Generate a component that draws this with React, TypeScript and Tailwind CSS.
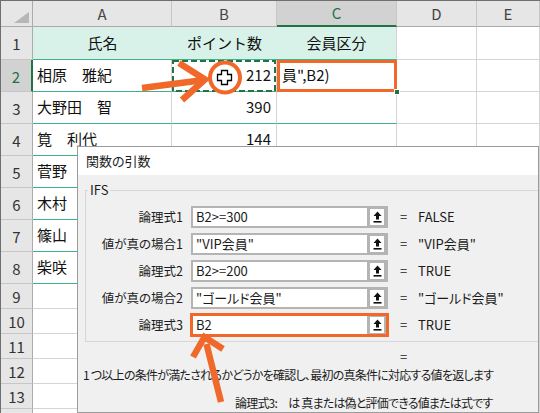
import React from 'react';

const GRID = 'grid grid-cols-[32px_139px_105px_120px_80px_63px]';

const people = [
  { n: 2, name: '相原　雅紀', pt: '212' },
  { n: 3, name: '大野田　智', pt: '390' },
  { n: 4, name: '筧　利代', pt: '144' },
  { n: 5, name: '菅野', pt: '' },
  { n: 6, name: '木村', pt: '' },
  { n: 7, name: '篠山', pt: '' },
  { n: 8, name: '柴咲', pt: '' },
];

const args = [
  { label: '論理式1', value: 'B2>=300', result: 'FALSE' },
  { label: '値が真の場合1', value: '"VIP会員"', result: '"VIP会員"' },
  { label: '論理式2', value: 'B2>=200', result: 'TRUE' },
  { label: '値が真の場合2', value: '"ゴールド会員"', result: '"ゴールド会員"' },
  { label: '論理式3', value: 'B2', result: 'TRUE', active: true },
];

const ColHead: React.FC<{ label: string; selected?: boolean }> = ({ label, selected }) =>
  selected ? (
    <div className="h-[26px] flex items-center justify-center pt-[1px] bg-[#d2d2d2] border-r border-r-[#c6c6c6] border-b-2 border-b-[#217346] text-[#217346] text-[15px]">
      {label}
    </div>
  ) : (
    <div className="h-[26px] flex items-center justify-center pt-[1px] bg-[#e6e6e6] border-r border-b border-r-[#c6c6c6] border-b-[#ababab] text-[#444] text-[15px]">
      {label}
    </div>
  );

const RowHead: React.FC<{ n?: number; tall?: string; selected?: boolean }> = ({ n, tall, selected }) =>
  selected ? (
    <div className={`${tall} flex items-center justify-center pt-[3px] bg-[#d2d2d2] border-b border-b-[#c6c6c6] border-r-2 border-r-[#217346] text-[#217346] text-[15px]`}>
      {n}
    </div>
  ) : (
    <div className={`${tall} flex items-center justify-center pt-[3px] bg-[#e6e6e6] border-b border-r border-b-[#c6c6c6] border-r-[#ababab] text-[#333] text-[15px]`}>
      {n}
    </div>
  );

const RefButton = () => (
  <div className="w-[19px] h-full bg-[#b4b4b4] pl-[3px] pr-[2px] py-[1px] flex">
    <div className="flex-1 bg-white flex items-center justify-center">
      <svg width="9" height="12" viewBox="0 0 9 12">
        <path d="M4.5 0.5 L8.5 5 H6 V8.5 H3 V5 H0.5 Z" fill="#111" />
        <rect x="0.5" y="10" width="8" height="1.6" fill="#111" />
      </svg>
    </div>
  </div>
);

const FunctionDialog = () => (
  <div className="absolute left-[76px] top-[145px] w-[462px] h-[267px] border border-[#9b9b9b] bg-[#f0f0f0] overflow-hidden flex flex-col font-['Noto_Sans_CJK_JP',sans-serif] text-[12.5px] text-[#1b1b1b] [font-feature-settings:'palt']">
    <div className="h-[28px] shrink-0 bg-white flex items-center pl-[8px] text-[13px]">関数の引数</div>

    <div className="relative mt-[15px] ml-[7px] w-[480px] shrink-0 border border-[#d7d7d7] pt-[15px] pb-[5px] flex flex-col gap-[5px]">
      <span className="absolute -top-[10px] left-[2px] px-[2px] bg-[#f0f0f0] leading-[18px] text-[13px]">IFS</span>
      {args.map((a) => (
        <div key={a.label} className="h-[22px] flex items-center">
          <div className="w-[97px] text-right whitespace-nowrap leading-[22px]">{a.label}</div>
          <div className="relative ml-[8px] w-[197px] h-[22px] flex border-2 border-[#b4b4b4] bg-white">
            <div className="flex-1 pl-[3px] flex items-center whitespace-nowrap text-[13px]">{a.value}</div>
            <RefButton />
            {a.active && (
              <span className="absolute -left-[3px] -top-[3px] -right-[3px] -bottom-[3px] border-[3px] border-[#f0692b]" />
            )}
          </div>
          <div className="ml-[12px] w-[18px] text-[13px]">=</div>
          <div className="whitespace-nowrap text-[13px]">{a.result}</div>
        </div>
      ))}
    </div>

    <div className="mt-[6px] h-[18px] leading-[18px] pl-[322px] text-[13px]">=</div>
    <div className="h-[18px] leading-[18px] pl-[5px] whitespace-nowrap text-[12px] tracking-[-0.75px]">
      1 つ以上の条件が満たされるかどうかを確認し、最初の真条件に対応する値を返します
    </div>
    <div className="mt-[10px] h-[18px] leading-[18px] pl-[157px] whitespace-nowrap text-[12px] tracking-[-0.8px]">
      論理式3:　は 真または偽と評価できる値または式です
    </div>
  </div>
);

export default function App() {
  return (
    <div className="relative w-[540px] h-[413px] overflow-hidden bg-white border-l border-t border-[#6f6f6f] font-['Noto_Sans_CJK_JP',sans-serif] text-[#111]">
      <div className={GRID}>
        {/* header row */}
        <div className="relative h-[26px] bg-[#e6e6e6] border-r border-b border-r-[#ababab] border-b-[#ababab]">
          <svg className="absolute right-[3px] bottom-[3px]" width="15" height="11" viewBox="0 0 15 11">
            <path d="M15 0 V11 H0 Z" fill="#b7b7b7" />
          </svg>
        </div>
        <ColHead label="A" />
        <ColHead label="B" />
        <ColHead label="C" selected />
        <ColHead label="D" />
        <ColHead label="E" />

        {/* table header row */}
        <RowHead n={1} tall="h-[33px]" />
        <div className="h-[33px] bg-[#d8f1e9] border-b border-b-[#3fb28b] flex items-center justify-center text-[15px]">氏名</div>
        <div className="h-[33px] bg-[#d8f1e9] border-b border-b-[#3fb28b] flex items-center justify-center text-[15px]">ポイント数</div>
        <div className="h-[33px] bg-[#d8f1e9] border-b border-r border-b-[#3fb28b] border-r-[#d4d4d4] flex items-center justify-center text-[15px]">会員区分</div>
        <div className="h-[33px] border-r border-b border-[#d4d4d4]" />
        <div className="h-[33px] border-r border-b border-[#d4d4d4]" />

        {people.map((p) => (
          <React.Fragment key={p.n}>
            <RowHead n={p.n} tall="h-[32px]" selected={p.n === 2} />
            <div className="h-[32px] border-r border-b border-r-[#d4d4d4] border-b-[#3fb28b] flex items-center pl-[4px] text-[15px] whitespace-nowrap">
              {p.name}
            </div>
            <div className="relative h-[32px] border-r border-b border-r-[#d4d4d4] border-b-[#3fb28b] flex items-center justify-end pr-[5px] text-[15px]">
              {p.pt}
              {p.n === 2 && (
                <svg className="absolute left-0 top-0" width="105" height="32" viewBox="0 0 105 32">
                  <rect x="1" y="1" width="102" height="30" fill="none" stroke="#217346" strokeWidth="2" strokeDasharray="6 3" />
                </svg>
              )}
            </div>
            {p.n === 2 ? (
              <div className="relative h-[32px] border-r border-b border-r-[#d4d4d4] border-b-[#3fb28b] flex items-center pl-[5px] text-[15px] whitespace-nowrap">
                員",B2)
                <span className="absolute left-0 top-0 -right-px -bottom-px border-[3px] border-[#f0692b]" />
                <span className="absolute -right-[4px] -bottom-[4px] w-[6px] h-[6px] bg-[#217346] border border-white" />
              </div>
            ) : (
              <div className="h-[32px] border-r border-b border-r-[#d4d4d4] border-b-[#3fb28b]" />
            )}
            <div className="h-[32px] border-r border-b border-[#d4d4d4]" />
            <div className="h-[32px] border-r border-b border-[#d4d4d4]" />
          </React.Fragment>
        ))}

        {[9, 10, 11, 12, 13].map((n) => (
          <React.Fragment key={n}>
            <RowHead n={n} tall="h-[25px]" />
            <div className="h-[25px] border-r border-b border-[#d4d4d4]" />
            <div className="h-[25px] border-r border-b border-[#d4d4d4]" />
            <div className="h-[25px] border-r border-b border-[#d4d4d4]" />
            <div className="h-[25px] border-r border-b border-[#d4d4d4]" />
            <div className="h-[25px] border-r border-b border-[#d4d4d4]" />
          </React.Fragment>
        ))}
        <RowHead tall="h-[25px]" />
        <div className="h-[25px] border-r border-[#d4d4d4]" />
        <div className="h-[25px] border-r border-[#d4d4d4]" />
        <div className="h-[25px] border-r border-[#d4d4d4]" />
        <div className="h-[25px] border-r border-[#d4d4d4]" />
        <div className="h-[25px] border-r border-[#d4d4d4]" />
      </div>

      <FunctionDialog />

      {/* annotation arrows, circle and cursor */}
      <svg className="absolute -left-px -top-px pointer-events-none" width="540" height="413" viewBox="0 0 540 413">
        <g stroke="#f0692b" strokeWidth="6.5" fill="none">
          <line x1="142" y1="88" x2="200" y2="80.5" />
          <polyline points="179,63 205,79.5 182,100" strokeLinejoin="miter" />
          <circle cx="225" cy="77.5" r="15" fill="white" strokeWidth="4" />
          <line x1="221" y1="402" x2="206.5" y2="344" />
          <polyline points="193,357 204.5,337 223,349" strokeLinejoin="miter" />
        </g>
        <polygon
          points="221.5,70.5 227.5,70.5 227.5,74.5 231.5,74.5 231.5,80.5 227.5,80.5 227.5,84.5 221.5,84.5 221.5,80.5 217.5,80.5 217.5,74.5 221.5,74.5"
          fill="white"
          stroke="#000"
          strokeWidth="1.3"
        />
      </svg>
    </div>
  );
}
